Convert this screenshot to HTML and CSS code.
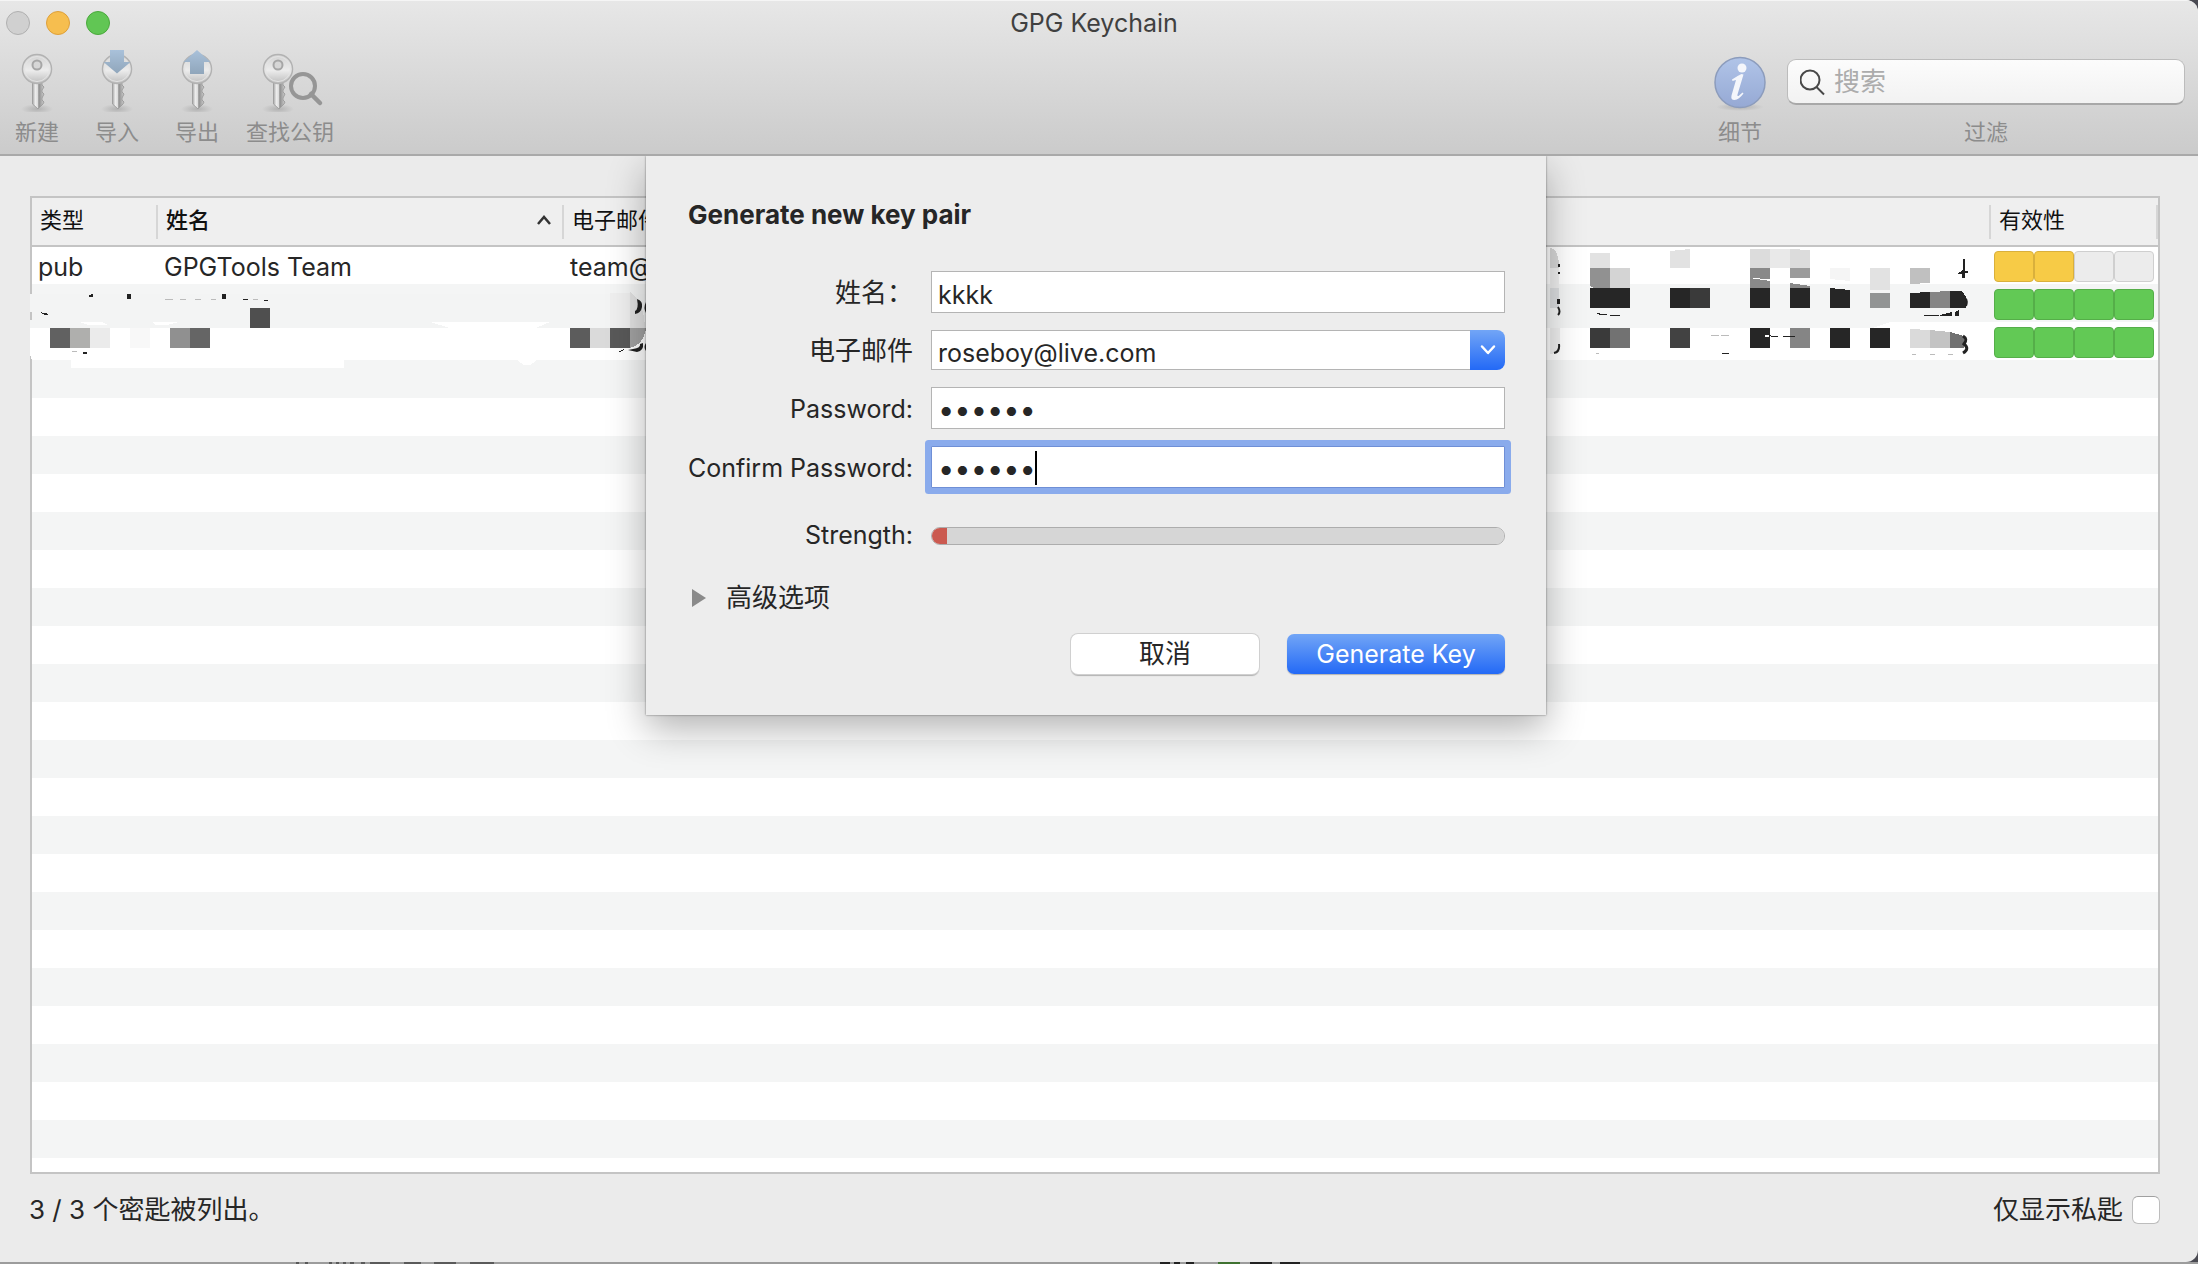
FILE: index.html
```html
<!DOCTYPE html>
<html lang="zh-CN">
<head>
<meta charset="utf-8">
<title>GPG Keychain</title>
<link rel="stylesheet" href="styles.css">
</head>
<body>
<svg class="defs" width="0" height="0" aria-hidden="true">
  <defs>
    <linearGradient id="metal" x1="0" y1="0" x2="0" y2="1"><stop offset="0" stop-color="#d2d2d2"/><stop offset=".55" stop-color="#ececec"/><stop offset="1" stop-color="#bdbdbd"/></linearGradient>
    <linearGradient id="shaft" x1="0" y1="0" x2="1" y2="0"><stop offset="0" stop-color="#a6a6a6"/><stop offset=".25" stop-color="#ededed"/><stop offset=".45" stop-color="#dcdcdc"/><stop offset=".55" stop-color="#8d8d8d"/><stop offset="1" stop-color="#cfcfcf"/></linearGradient>
    <linearGradient id="arrow" x1="0" y1="0" x2="0" y2="1"><stop offset="0" stop-color="#a9c1da"/><stop offset="1" stop-color="#90a6bb"/></linearGradient>
    <linearGradient id="info" x1="0" y1="0" x2="0" y2="1"><stop offset="0" stop-color="#b0c4e8"/><stop offset="1" stop-color="#96a9d4"/></linearGradient>
    <radialGradient id="ground"><stop offset="0" stop-color="#000" stop-opacity=".16"/><stop offset="1" stop-color="#000" stop-opacity="0"/></radialGradient>
    <g id="key">
      <ellipse cx="24" cy="61" rx="16" ry="5" fill="url(#ground)"/>
      <path d="M19.500 33H29v4l2 2-2 3 0 2 2 2-2 4 0 2 2 2-1 2-5 5-5.500-5z" fill="url(#shaft)" stroke="#a0a0a0"/>
      <circle cx="24" cy="21" r="14.500" fill="url(#metal)" stroke="#b2b2b2" stroke-width="1.500"/>
      <circle cx="24" cy="21" r="12.500" fill="none" stroke="#e4e4e4"/>
    </g>
    <circle id="hole" cx="24" cy="17" r="4.500" fill="#d6d6d6" stroke="#a6a6a6" stroke-width="2"/>
  </defs>
</svg>
<div class="window">
  <header class="chrome">
    <div class="titlebar">
      <div class="lights">
        <button class="light" aria-label="关闭"></button>
        <button class="light light-min" aria-label="最小化"></button>
        <button class="light light-zoom" aria-label="缩放"></button>
      </div>
      <h1 class="title">GPG Keychain</h1>
    </div>
    <div class="toolbar">
      <button class="tool"><svg width="48" height="64"><use href="#key"/><use href="#hole"/></svg><span>新建</span></button>
      <button class="tool"><svg width="48" height="64"><use href="#key"/><path d="M17 2h14v12h6.500L24 25.500 10.500 14H17z" fill="url(#arrow)"/></svg><span>导入</span></button>
      <button class="tool"><svg width="48" height="64"><use href="#key"/><path d="M24 2l13.500 12H31v12H17V14h-6.500z" fill="url(#arrow)"/></svg><span>导出</span></button>
      <button class="tool"><svg width="88" height="64"><g transform="translate(8 0)"><use href="#key"/><use href="#hole"/></g><circle cx="57" cy="38" r="12" fill="none" stroke="#969696" stroke-width="4"/><path d="M65 46l9 9" stroke="#969696" stroke-width="4.500" stroke-linecap="round"/></svg><span>查找公钥</span></button>
      <button class="tool tool-info"><svg width="56" height="64" viewBox="0 0 56 64"><ellipse cx="28" cy="59" rx="24" ry="4" fill="url(#ground)"/><circle cx="28" cy="34.500" r="25" fill="url(#info)" stroke="#8c9cbc" stroke-width="1.500"/><circle cx="30" cy="20" r="4.500" fill="#f4f6fb"/><path d="M20 31.500q5-3.500 9.500-5.500l2 .5-6 20q-.5 2 1 1.500l4-3.500 1 1q-4.500 6-9 6.500-4 0-3-4.500l4.500-15.500q-2 .5-3.500 1z" fill="#f4f6fb"/></svg><span>细节</span></button>
      <div class="search">
        <div class="search-box">
          <svg width="28" height="28" viewBox="0 0 28 28" fill="none" stroke="#484848" stroke-width="2"><circle cx="10" cy="12" r="9.500"/><path d="M16.500 19l7.500 7.500"/></svg>
          <input id="filter" type="search" placeholder="搜索">
        </div>
        <label for="filter">过滤</label>
      </div>
    </div>
  </header>

  <main class="content">
    <div class="list">
      <table class="keys">
        <colgroup><col class="c-type"><col class="c-name"><col><col class="c-valid"></colgroup>
        <thead>
          <tr>
            <th><div>类型</div></th>
            <th class="sorted"><div>姓名<svg width="16" height="10" viewBox="0 0 16 10"><path d="M2 9l6-7 6 7" fill="none" stroke="#333" stroke-width="2.500"/></svg></div></th>
            <th class="plain"><div>电子邮件</div></th>
            <th class="valid"><div>有效性</div></th>
          </tr>
        </thead>
        <tbody>
          <tr><td>pub</td><td>GPGTools Team</td><td>team@gpgtools.org</td><td><div class="bars"><i class="mid"></i><i class="mid"></i><i></i><i></i></div></td></tr>
          <tr><td></td><td></td><td></td><td><div class="bars"><i class="ok"></i><i class="ok"></i><i class="ok"></i><i class="ok"></i></div></td></tr>
          <tr><td></td><td></td><td></td><td><div class="bars"><i class="ok"></i><i class="ok"></i><i class="ok"></i><i class="ok"></i></div></td></tr>
        </tbody>
      </table>

      <svg class="redact redact-left" width="620" height="92" viewBox="30 280 620 92" shape-rendering="crispEdges" aria-hidden="true">
        <path d="M30 294h616v34H30z" fill="#f3f4f4"/>
        <path d="M30 312h2v8h-2z" fill="#c4c4c4"/>
        <path d="M30 328h616v27h-2v5H32l-2-5zM71 360h273v8H71zM430 322h120l-14 6h-86zM80 322h22l6 3H88zM152 322h27l-12 3h-12zM518 360h18q-9 11-18 0z" fill="#fff"/>
        <path d="M610 293h20v35h-20z" fill="#efefef"/>
        <path d="M630 292q14 10 15 36h-15z" fill="#e2e2e2"/>
        <path d="M250 308h20v20h-20z" fill="#4f4f4f"/>
        <path d="M50 328h20v20H50z" fill="#616161"/>
        <path d="M70 328h20v20H70z" fill="#afafad"/>
        <path d="M90 328h20v20H90z" fill="#ebebeb"/>
        <path d="M130 328h20v20h-20z" fill="#f8f8f8"/>
        <path d="M170 328h20v20h-20z" fill="#909090"/>
        <path d="M190 328h20v20h-20z" fill="#656565"/>
        <path d="M570 328h20v20h-20z" fill="#5c5c5c"/>
        <path d="M590 328h20v20h-20z" fill="#dadada"/>
        <path d="M610 328h20v20h-20z" fill="#595959"/>
        <path d="M630 328h16q-2 16-16 20z" fill="#a2a2a2"/>
        <path d="M89 295l4-1v3h-4zM127 294h4v5h-4zM222 294h4v5h-4zM264 300h4v1h-4zM243 299h5v1h-5zM40 312l4 1 6 1-5 1zM83 352h4v2h-4zM618 352l6-3-1 2z" fill="#222"/>
        <path d="M637 299q6 2 5 8-1 6-7 7v-3q4-2 2-12zM646 302v11q-3-5 0-11zM628 350l5-1q8-1 7-5l3-1q1 8-6 9zM646 343v8q-3-4 0-8z" fill="#222" shape-rendering="auto"/>
        <path d="M72 351l5 1M165 299h8M180 299h6M195 299h6M211 299h5M253 299h5" stroke="#bbb"/>
      </svg>

      <svg class="redact redact-right" width="444" height="120" viewBox="1546 246 444 120" shape-rendering="crispEdges" aria-hidden="true">
        <path d="M1546 322h344l-18 6h-326zM1834 292l156-8v10h-120z" fill="#f4f5f5"/>
        <path d="M1872 328l28-6h90v6z" fill="#fff"/>
        <path d="M1550 248q9 1 9 20h-9z" fill="#d8d8d8"/>
        <path d="M1550 268h9v20h-9z" fill="#efefef"/>
        <path d="M1550 288h9v20h-9z" fill="#dcdee0"/>
        <path d="M1550 328h10v24l-10 2z" fill="#efefef"/>
        <path d="M1590 253h20v15h-20zM1670 251l20-2v19h-20zM1870 268h20v22h-20z" fill="#e2e2e2"/>
        <path d="M1750 249h20v19h-20zM1790 249l20 1v18h-20z" fill="#dcdcdc"/>
        <path d="M1770 249h20v19h-20z" fill="#e9e9e9"/>
        <path d="M1590 268h20v20h-16l-4-2z" fill="#919191"/>
        <path d="M1610 268h20v20h-20z" fill="#d4d4d4"/>
        <path d="M1750 268h20v20h-20zM1790 283l20 3v2h-20z" fill="#898989"/>
        <path d="M1790 268h20v10h-20z" fill="#9b9b9b"/>
        <path d="M1750 278l20 1v2l-20-3z" fill="#fff"/>
        <path d="M1830 268h20v13l-20-2z" fill="#f5f5f5"/>
        <path d="M1910 268h20v15l-20 1z" fill="#c0c0c0"/>
        <path d="M1590 288h40v20h-40zM1670 288h20v20h-20zM1750 288h20v20h-20zM1790 288h20v20h-20zM1830 288l20 2v18h-20zM1910 293l20-1v16h-20zM1950 291h12l4 6v11h-16zM1750 328h20v20h-20zM1830 328h20v20h-20zM1870 328h20v20h-20z" fill="#262626"/>
        <path d="M1690 288h20v20h-20zM1590 328h20v20h-20z" fill="#3a3a3a"/>
        <path d="M1870 293h20v15h-20z" fill="#929494"/>
        <path d="M1930 292l20-1v17h-20zM1790 328h20v20h-20z" fill="#858585"/>
        <path d="M1610 328h20v20h-20z" fill="#727272"/>
        <path d="M1670 328h20v20h-20z" fill="#424242"/>
        <path d="M1910 329l20 1v18h-20z" fill="#dadada"/>
        <path d="M1930 330l20 2v16h-20z" fill="#c3c3c3"/>
        <path d="M1950 332l14 4v12h-14z" fill="#717171"/>
        <path d="M1963 259h2v19h-3v-4h-5l6-4zM1965 271h3v2h-3zM1596 313l14 2h-10zM1610 315h10v1h-10zM1924 315h15v1h-15zM1940 315l12-3v4h-12zM1955 312l4-2v6h-4zM1722 353h7v1h-7zM1764 335l14 1v1l-14-1zM1783 336h12v1h-12zM1558 264h2v3h-2zM1558 272h2v2h-2zM1557 299h3v5h-3z" fill="#222"/>
        <path d="M1765 335h4v2h-4z" fill="#fff"/>
        <path d="M1558 307q3 5 0 8M1559 344q1 8-5 9M1965 298q3 2 1 8" fill="none" stroke="#222" stroke-width="2" shape-rendering="auto"/>
        <path d="M1963 336q5 3 1 8 6 5-1 9" fill="none" stroke="#222" stroke-width="3" shape-rendering="auto"/>
        <path d="M1711 335h8M1721 335h8M1912 354h4M1930 354h5M1948 354h5M1596 353h3" stroke="#bbb"/>
      </svg>
    </div>

    <footer class="status">
      <span>3 / 3 个密匙被列出。</span>
      <label class="private" for="private">仅显示私匙<input id="private" type="checkbox"></label>
    </footer>
  </main>

  <dialog class="sheet" open aria-labelledby="sheet-title">
    <form class="form">
      <h2 id="sheet-title">Generate new key pair</h2>
      <div class="fields">
        <label class="han" for="name">姓名：</label>
        <input id="name" class="field" type="text" value="kkkk">
        <label class="han" for="email">电子邮件</label>
        <div class="combo">
          <input id="email" class="field" type="text" value="roseboy@live.com">
          <button type="button" aria-label="选择电子邮件"><svg width="16" height="12" viewBox="0 0 16 12"><path d="M2 2.500l6 6.500 6-6.500" fill="none" stroke="#fff" stroke-width="2.500" stroke-linecap="round" stroke-linejoin="round"/></svg></button>
        </div>
        <label for="pw">Password:</label>
        <input id="pw" class="field secret" type="password" value="kkkkkk">
        <label for="pw2">Confirm Password:</label>
        <div class="focused"><input id="pw2" class="field secret" type="password" value="kkkkkk"><span class="caret"></span></div>
        <label class="strength-label" for="strength">Strength:</label>
        <progress id="strength" class="strength" max="100" value="2.600"></progress>
      </div>
      <details class="advanced"><summary><svg width="14" height="18"><path d="M0 0l14 9-14 9z" fill="#8a8a8a"/></svg>高级选项</summary></details>
      <div class="actions">
        <button type="button" class="btn cancel">取消</button>
        <button type="submit" class="btn primary">Generate Key</button>
      </div>
    </form>
  </dialog>
</div>
<div class="behind" aria-hidden="true">
  <svg width="1400" height="2" shape-rendering="crispEdges"><path d="M296 1h3M305 1h3M329 1h3M336 1h3M343 1h3M350 1h4M361 1h4M370 1h20M404 1h17M434 1h22M470 1h24" stroke="#5a5a5a" stroke-width="2"/><path d="M1160 1h10M1174 1h6M1186 1h8M1250 1h22M1280 1h20" stroke="#222" stroke-width="2"/><path d="M1218 1h22" stroke="#3f7230" stroke-width="2"/></svg>
</div>
</body>
</html>
```

FILE: styles.css
```css
* { box-sizing: border-box; }

body {
  margin: 0;
  height: 100vh;
  display: flex;
  flex-direction: column;
  background: #4a4a52;
  color: #262626;
  font-family: Inter, "Noto Sans CJK SC", sans-serif;
  font-size: 25px;
  line-height: 32px;
}

button, input { font: inherit; color: inherit; }
button { border: 0; padding: 0; background: none; }
.defs { position: absolute; }

.window {
  position: relative;
  flex: 1;
  min-height: 0;
  display: flex;
  flex-direction: column;
  background: #ebebeb;
  border-radius: 0 12px 12px 0;
  overflow: hidden;
}

.behind { height: 2px; background: #9c9c9c; overflow: hidden; }
.behind svg { display: block; }

/* Title bar and toolbar */
.chrome {
  background: linear-gradient(#e7e7e7, #cbcbcb);
  border-top: 1px solid #f5f5f5;
  border-bottom: 2px solid #a9a9a9;
}
.titlebar {
  display: grid;
  grid-template-columns: 1fr auto 1fr;
  align-items: center;
  height: 43px;
  padding: 0 16px 0 6px;
}
.lights { display: flex; gap: 16px; }
.light {
  width: 24px;
  height: 24px;
  border: 1px solid #b0b0b0;
  border-radius: 50%;
  background: #d0d0d0;
}
.light-min { background: #f6be4f; border-color: #dea03a; }
.light-zoom { background: #61c654; border-color: #4aa93c; }
.title { margin: 0; font-size: 25px; font-weight: 400; color: #404040; }

.toolbar {
  display: flex;
  gap: 12px;
  padding: 4px 13px 8px 3px;
  font-size: 22px;
  line-height: 28px;
  color: #8c8c8c;
}
.tool {
  min-width: 68px;
  padding: 0 3px;
  display: flex;
  flex-direction: column;
  align-items: center;
  gap: 6px;
}
.tool-info { margin: 0 1px 0 auto; }
.search {
  width: 398px;
  display: flex;
  flex-direction: column;
  align-items: center;
  gap: 13px;
  padding-top: 11px;
}
.search-box {
  width: 100%;
  height: 46px;
  display: flex;
  align-items: center;
  gap: 6px;
  padding: 1px 12px 0;
  background: linear-gradient(#fcfcfc, #f2f2f2);
  border: 1px solid #bcbcbc;
  border-bottom: 2px solid #a8a8a8;
  border-radius: 9px;
}
.search-box input {
  flex: 1;
  min-width: 0;
  padding: 0;
  border: 0;
  outline: 0;
  background: none;
  font-size: 26px;
}
.search-box input::placeholder { color: #acacac; }

/* Key list */
.content {
  flex: 1;
  min-height: 0;
  display: flex;
  flex-direction: column;
  padding: 40px 38px 34px 30px;
}
.list {
  position: relative;
  flex: 1;
  min-height: 0;
  border: 2px solid #c4c4c4;
  background: repeating-linear-gradient(#fff 0 38px, #f4f5f5 38px 76px) 0 48px no-repeat;
}
.keys {
  width: 100%;
  table-layout: fixed;
  border-collapse: collapse;
}
.c-type { width: 126px; }
.c-name { width: 406px; }
.c-valid { width: 167px; }
.keys th {
  height: 48px;
  padding: 0;
  background: #efefef;
  border-bottom: 2px solid #c4c4c4;
  text-align: left;
  font-size: 22px;
  font-weight: 400;
  color: #111;
}
.keys th div {
  height: 34px;
  padding: 0 10px 3px 8px;
  display: flex;
  align-items: center;
  justify-content: space-between;
  border-right: 2px solid #d6d6d6;
}
.keys th.sorted { font-weight: 500; }
.keys td {
  height: 38px;
  padding: 2px 6px 0;
  white-space: nowrap;
  overflow: hidden;
}
.keys td:last-child { padding: 2px 3px 0; }
.bars { display: flex; }
.bars i {
  width: 40px;
  height: 31px;
  border: 1px solid #cfcfcf;
  border-radius: 4px;
  background: #ececec;
}
.bars .mid { background: #f7cb46; border-color: #d9b03c; }
.bars .ok { background: #62c955; border-color: #55ae49; }

/* Smudges painted over private rows */
.redact { position: absolute; }
.redact-left { left: -2px; top: 82px; }
.redact-right { right: 168px; top: 48px; }

.status {
  display: flex;
  justify-content: space-between;
  align-items: center;
  height: 54px;
  padding-top: 18px;
  font-size: 26px;
}
.status span { margin-left: -1px; }
.private { display: flex; align-items: center; gap: 9px; }
.private input {
  appearance: none;
  width: 28px;
  height: 28px;
  margin: 0;
  border: 1px solid #bdbdbd;
  border-top-color: #a0a0a0;
  border-radius: 6px;
  background: #fff;
}

/* Sheet */
.sheet {
  position: absolute;
  inset: 156px 6px auto 0;
  width: 900px;
  margin: 0 auto;
  padding: 43px 41px 41px;
  border: 0;
  color: inherit;
  background: #ededed;
  box-shadow: 0 0 2px rgba(0, 0, 0, .5), 0 14px 36px rgba(0, 0, 0, .3);
  clip-path: inset(0 -60px -70px);
}
.sheet h2 {
  margin: 0 0 40px 1px;
  font-size: 26px;
  line-height: 32px;
  font-weight: 700;
}
.fields {
  display: grid;
  grid-template-columns: 226px 1fr;
  gap: 17px 18px;
  align-items: center;
}
.fields label { padding-top: 2px; text-align: right; white-space: nowrap; }
.fields .han { font-size: 26px; }
.field {
  display: block;
  width: 100%;
  height: 42px;
  padding: 5px 6px 0;
  border: 1px solid #b4b4b4;
  border-radius: 0;
  outline: 0;
  background: #fff;
}
.secret { padding-top: 2px; font-size: 29px; }
.combo { display: flex; height: 40px; }
.combo .field { flex: 1; min-width: 0; height: 40px; border-right: 0; }
.combo button {
  width: 35px;
  display: grid;
  place-items: center;
  border-radius: 0 8px 8px 0;
  background: linear-gradient(#72a5f6, #2369f6);
}
.focused { position: relative; }
.focused .field { border-color: #6f8fd6; box-shadow: 0 0 0 6px #8aabec; border-radius: 1px; }
.caret {
  position: absolute;
  left: 104px;
  top: 5px;
  width: 2px;
  height: 34px;
  background: #000;
}
.fields .strength-label { margin-top: 14px; padding: 0; }
.strength {
  appearance: none;
  width: 100%;
  height: 18px;
  margin-top: 16px;
  padding: 0;
  border: 1px solid #adadad;
  border-radius: 9px;
  overflow: hidden;
  background: #d6d6d6;
}
.strength::-webkit-progress-bar { background: #d6d6d6; }
.strength::-webkit-progress-value { background: #cb5a50; }

.advanced { margin-top: 31px; font-size: 26px; }
.advanced summary { display: flex; align-items: center; gap: 20px; padding-left: 5px; list-style: none; }
.actions { display: flex; justify-content: flex-end; gap: 28px; margin-top: 20px; }
.btn { height: 40px; border-radius: 7px; font-size: 25px; }
.cancel { width: 188px; font-size: 26px; background: #fff; box-shadow: 0 0 0 1px #d0d0d0, 0 2px 1px rgba(0, 0, 0, .25); }
.primary { width: 218px; color: #fff; background: linear-gradient(#72a5f6, #2369f6); box-shadow: 0 1px 1px rgba(0, 0, 0, .25); }
```
